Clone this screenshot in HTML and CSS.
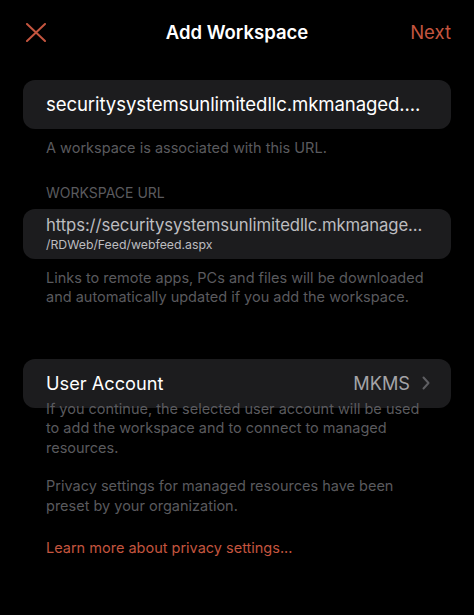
FILE: index.html
```html
<!DOCTYPE html>
<html lang="en">
<head>
  <meta charset="UTF-8">
  <title>Add Workspace</title>
  <link rel="stylesheet" href="styles.css">
</head>
<body>
  <div class="topbar">
    <span class="close">
      <svg width="20" height="19" viewBox="0 0 20 19"><path d="M1 1 L19 18 M19 1 L1 18" stroke="#c4553f" stroke-width="2" stroke-linecap="round"/></svg>
    </span>
    <h1>Add Workspace</h1>
    <span class="next">Next</span>
  </div>

  <div class="card single">securitysystemsunlimitedllc.mkmanaged....</div>
  <p class="foot">A workspace is associated with this URL.</p>

  <p class="label">WORKSPACE URL</p>
  <div class="card url">
    <div class="url-main">https://securitysystemsunlimitedllc.mkmanage...</div>
    <div class="url-sub">/RDWeb/Feed/webfeed.aspx</div>
  </div>
  <p class="foot">Links to remote apps, PCs and files will be downloaded and automatically updated if you add the workspace.</p>

  <div class="card row">
    <span>User Account</span>
    <span class="value">MKMS
      <svg width="8" height="14" viewBox="0 0 8 14"><path d="M1.5 1.5 L6.5 7 L1.5 12.5" fill="none" stroke="#5e5e62" stroke-width="2" stroke-linecap="round" stroke-linejoin="round"/></svg>
    </span>
  </div>
  <p class="foot overlap">If you continue, the selected user account will be used to add the workspace and to connect to managed resources.</p>

  <p class="foot privacy">Privacy settings for managed resources have been preset by your organization.</p>

  <p class="link">Learn more about privacy settings...</p>
</body>
</html>
```

FILE: styles.css
```css
body {
  margin: 0;
  background: #000;
  color: #fff;
  font-family: Inter, "Liberation Sans", sans-serif;
  width: 474px;
  height: 615px;
  overflow: hidden;
}
.topbar {
  height: 64px;
  display: flex;
  align-items: center;
  justify-content: space-between;
  padding: 0 23px 0 26px;
  position: relative;
}
.topbar h1 {
  position: absolute;
  left: 0;
  right: 0;
  text-align: center;
  margin: 0;
  font-size: 18.5px;
  font-weight: 600;
  pointer-events: none;
}
.close {
  display: flex;
  margin-top: 1px;
}
.next {
  color: #c4553f;
  font-size: 18.5px;
}
.card {
  margin: 0 23px;
  background: #1c1c1e;
  border-radius: 12px;
  padding: 0 23px;
}
.single {
  margin-top: 16px;
  height: 49px;
  line-height: 49px;
  font-size: 18.6px;
  white-space: nowrap;
  letter-spacing: -0.1px;
}
.foot {
  margin: 9px 46px 0;
  font-size: 14.5px;
  line-height: 19.5px;
  color: #5a5a5e;
}
.label {
  margin: 25px 46px 0;
  font-size: 14px;
  line-height: 19px;
  color: #5a5a5e;
}
.url {
  margin-top: 7px;
  height: 50px;
  padding-top: 6px;
  box-sizing: border-box;
}
.url-main {
  font-size: 16.7px;
  line-height: 21px;
  color: #bdbdc0;
  white-space: nowrap;
  letter-spacing: -0.1px;
}
.url-sub {
  font-size: 12.3px;
  line-height: 17px;
  color: #bdbdc0;
}
.row {
  margin-top: 52px;
  height: 49px;
  display: flex;
  align-items: center;
  justify-content: space-between;
  font-size: 18.2px;
}
.value {
  color: #a4a4a8;
  display: flex;
  align-items: center;
  gap: 12px;
  margin-right: -2px;
}
.overlap {
  margin-top: -9px;
  position: relative;
}
.privacy {
  margin-top: 19px;
  line-height: 20px;
}
.link {
  margin: 22px 46px 0;
  font-size: 14.5px;
  line-height: 20px;
  color: #c4553f;
}
```
